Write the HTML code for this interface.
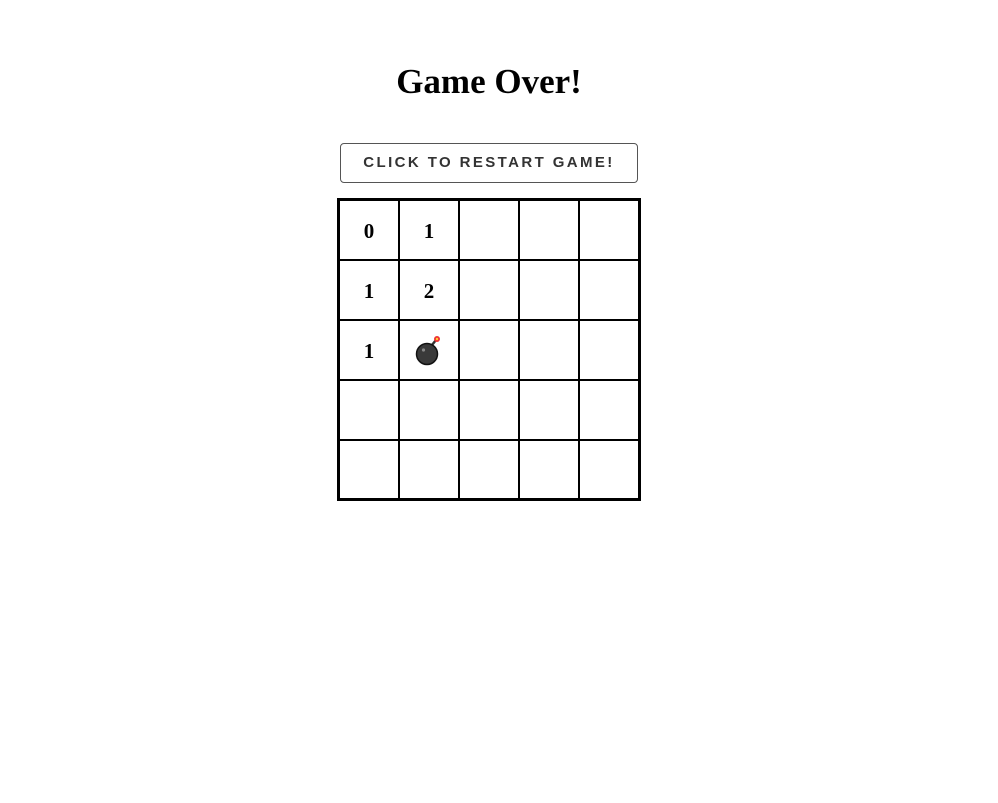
<!DOCTYPE html>
<html><head><style>
body{margin:0;background:#fff;width:998px;height:803px;position:relative;overflow:hidden}
h1{position:absolute;left:0;width:978px;top:62px;margin:0;text-align:center;font:bold 35px "Liberation Serif",serif;color:#000}
.btn{position:absolute;left:340px;top:143px;width:296px;height:38px;border:1px solid #555;border-radius:4px;box-sizing:content-box;text-align:center;font:bold 15px/38px "Liberation Sans",sans-serif;letter-spacing:2.4px;color:#333}
.grid{position:absolute;left:337px;top:198px;width:298px;height:297px;border:3px solid #000}
.v,.h{position:absolute;background:#000}
.v{top:0;width:2px;height:100%}
.h{left:0;height:2px;width:100%}
.n{position:absolute;width:60px;text-align:center;font:bold 21px "Liberation Serif",serif;color:#000}
</style></head><body>
<h1>Game Over!</h1>
<div class="btn">CLICK TO RESTART GAME!</div>
<div class="grid">
<div class="v" style="left:58px"></div><div class="v" style="left:118px"></div><div class="v" style="left:178px"></div><div class="v" style="left:238px"></div>
<div class="h" style="top:58px"></div><div class="h" style="top:118px"></div><div class="h" style="top:178px"></div><div class="h" style="top:238px"></div>
<div class="n" style="left:-1px;top:18px">0</div>
<div class="n" style="left:59px;top:18px">1</div>
<div class="n" style="left:-1px;top:78px">1</div>
<div class="n" style="left:59px;top:78px">2</div>
<div class="n" style="left:-1px;top:138px">1</div>
<svg style="position:absolute;left:74px;top:134px" width="32" height="32" viewBox="0 0 32 32">
<path d="M18 10 L22 5" stroke="#333" stroke-width="2.5"/>
<circle cx="13" cy="19" r="10.5" fill="#3a3a3a" stroke="#111" stroke-width="1.5"/>
<circle cx="9.5" cy="15" r="1.6" fill="#888"/>
<circle cx="23" cy="4" r="3" fill="#e33"/><circle cx="23" cy="4" r="1.2" fill="#fc3"/>
</svg>
</div>
</body></html>
